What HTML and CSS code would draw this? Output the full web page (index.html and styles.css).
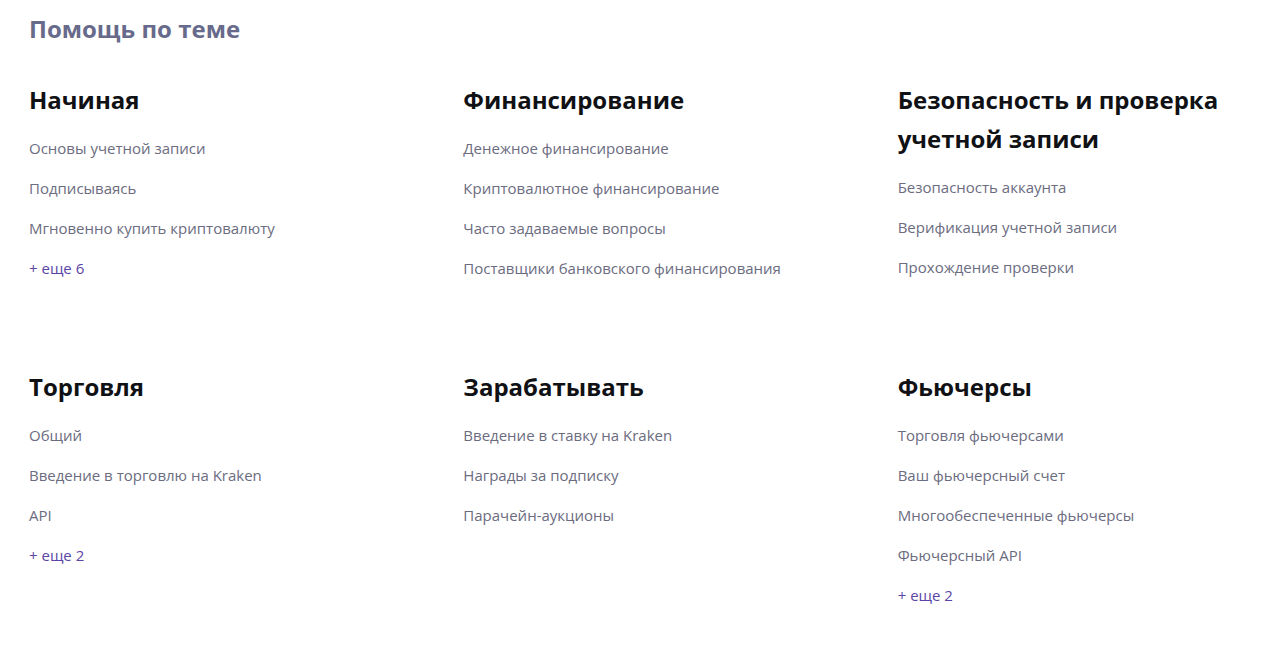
FILE: index.html
```html
<!DOCTYPE html>
<html lang="ru">
<head>
<meta charset="utf-8">
<title>Помощь по теме</title>
<link rel="stylesheet" href="styles.css">
</head>
<body>
<main class="help">
  <h2 class="help-title">Помощь по теме</h2>
  <div class="topics">
    <section class="topic">
      <h3 class="topic-title">Начиная</h3>
      <ul class="topic-links">
        <li><a href="#">Основы учетной записи</a></li>
        <li><a href="#">Подписываясь</a></li>
        <li><a href="#">Мгновенно купить криптовалюту</a></li>
        <li><a href="#" class="more">+ еще 6</a></li>
      </ul>
    </section>
    <section class="topic">
      <h3 class="topic-title">Финансирование</h3>
      <ul class="topic-links">
        <li><a href="#">Денежное финансирование</a></li>
        <li><a href="#">Криптовалютное финансирование</a></li>
        <li><a href="#">Часто задаваемые вопросы</a></li>
        <li><a href="#">Поставщики банковского финансирования</a></li>
      </ul>
    </section>
    <section class="topic">
      <h3 class="topic-title">Безопасность и проверка учетной записи</h3>
      <ul class="topic-links">
        <li><a href="#">Безопасность аккаунта</a></li>
        <li><a href="#">Верификация учетной записи</a></li>
        <li><a href="#">Прохождение проверки</a></li>
      </ul>
    </section>
    <section class="topic">
      <h3 class="topic-title">Торговля</h3>
      <ul class="topic-links">
        <li><a href="#">Общий</a></li>
        <li><a href="#">Введение в торговлю на Kraken</a></li>
        <li><a href="#">API</a></li>
        <li><a href="#" class="more">+ еще 2</a></li>
      </ul>
    </section>
    <section class="topic">
      <h3 class="topic-title">Зарабатывать</h3>
      <ul class="topic-links">
        <li><a href="#">Введение в ставку на Kraken</a></li>
        <li><a href="#">Награды за подписку</a></li>
        <li><a href="#">Парачейн-аукционы</a></li>
      </ul>
    </section>
    <section class="topic">
      <h3 class="topic-title">Фьючерсы</h3>
      <ul class="topic-links">
        <li><a href="#">Торговля фьючерсами</a></li>
        <li><a href="#">Ваш фьючерсный счет</a></li>
        <li><a href="#">Многообеспеченные фьючерсы</a></li>
        <li><a href="#">Фьючерсный API</a></li>
        <li><a href="#" class="more">+ еще 2</a></li>
      </ul>
    </section>
  </div>
</main>
</body>
</html>
```

FILE: styles.css
```css
* { box-sizing: border-box; }
html, body {
  margin: 0;
  padding: 0;
  background: #ffffff;
}
body {
  font-family: "Open Sans", "Noto Sans", sans-serif;
  color: #101114;
}
.help {
  padding: 13px 29px 0 29px;
}
.help-title {
  margin: 0;
  font-size: 24px;
  line-height: 32px;
  font-weight: 700;
  color: #676a8a;
}
.topics {
  display: grid;
  grid-template-columns: repeat(3, 1fr);
  column-gap: 84px;
  row-gap: 87px;
  margin-top: 35px;
}
.topic-title {
  margin: 0 0 17px 0;
  font-size: 24px;
  line-height: 39px;
  font-weight: 700;
  color: #101114;
}
.topic-links {
  list-style: none;
  margin: 0;
  padding: 0;
  display: flex;
  flex-direction: column;
  gap: 16px;
}
.topic-links li {
  line-height: 24px;
  font-size: 15px;
}
.topic-links a {
  color: #6b6c80;
  text-decoration: none;
}
.topic-links a.more {
  color: #5a45a6;
}
```
